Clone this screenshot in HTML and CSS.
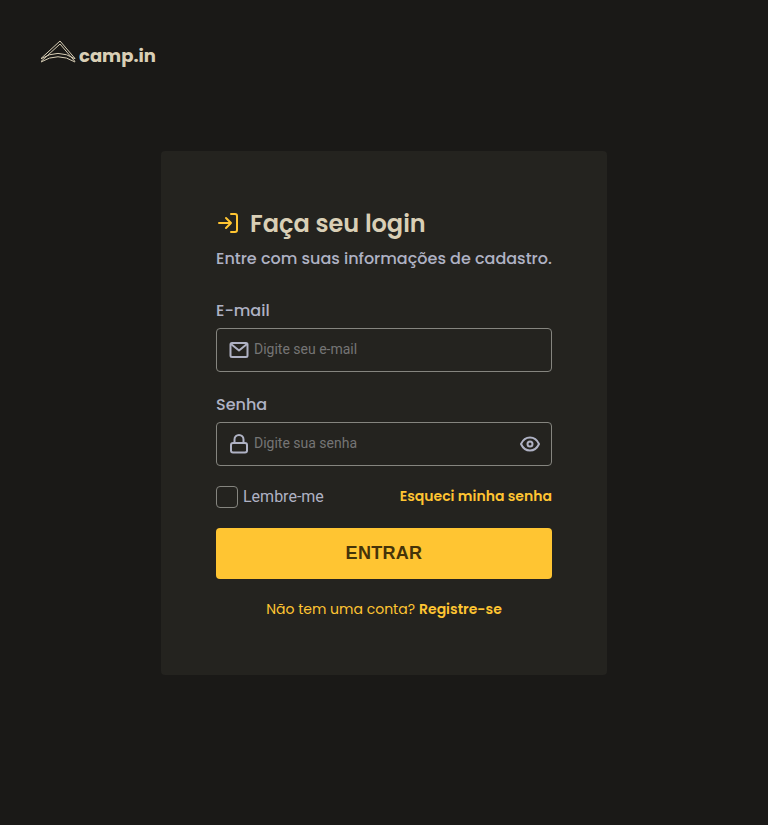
FILE: index.html
```html
<!DOCTYPE html>
<html lang="pt-BR">
<head>
<meta charset="utf-8">
<title>camp.in</title>
<link rel="stylesheet" href="styles.css">
</head>
<body>
<header class="header">
  <svg class="logo" width="36" height="24" viewBox="0 0 36 24" fill="none" stroke="currentColor" stroke-width="1"><path d="M1 18.500 20 1l15 17.500M1 21.500 20 4l15 17.500M1 18.800Q18 8 35 18.800M1 22Q18 11.500 35 22"/></svg>
  <span class="brand">camp.in</span>
</header>
<main class="card">
  <h1 class="title">
    <svg width="24" height="24" viewBox="0 0 24 24" fill="none" stroke="currentColor" stroke-width="2" stroke-linecap="round" stroke-linejoin="round"><path d="M15 3h4a2 2 0 0 1 2 2v14a2 2 0 0 1-2 2h-4M10 7l5 5-5 5M15 12H3"/></svg>
    <span>Faça seu login</span>
  </h1>
  <p class="subtitle">Entre com suas informações de cadastro.</p>
  <form class="form">
    <label class="label email-label" for="email">E-mail</label>
    <div class="field">
      <svg width="20" height="20" viewBox="0 0 20 20" fill="none" stroke="currentColor" stroke-width="2" stroke-linejoin="round"><rect x="1.5" y="3" width="17" height="14" rx="1.5"/><path d="m2 4 8 6.5L18 4"/></svg>
      <input id="email" type="text" placeholder="Digite seu e-mail">
    </div>
    <label class="label password-label" for="password">Senha</label>
    <div class="field">
      <svg width="20" height="20" viewBox="0 0 20 20" fill="none" stroke="currentColor" stroke-width="2" stroke-linejoin="round"><rect x="2" y="9" width="16" height="9.5" rx="2"/><path d="M5.5 9V5.5a4.5 4.5 0 0 1 9 0V9"/></svg>
      <input id="password" type="password" placeholder="Digite sua senha">
      <svg width="20" height="20" viewBox="0 0 20 20" fill="none" stroke="currentColor" stroke-width="2" stroke-linejoin="round"><path d="M1 10c2-4.300 5.200-6.500 9-6.500s7 2.200 9 6.500c-2 4.300-5.200 6.500-9 6.500S3 14.300 1 10z"/><circle cx="10" cy="10" r="2.500"/></svg>
    </div>
    <div class="options">
      <label class="remember"><input class="check" type="checkbox"><span>Lembre-me</span></label>
      <a class="forgot">Esqueci minha senha</a>
    </div>
    <button class="submit" type="button">ENTRAR</button>
  </form>
  <p class="register"><span class="question">Não tem uma conta?</span><a class="signup">Registre-se</a></p>
</main>
</body>
</html>
```
FILE: styles.css
```css
* { box-sizing: border-box; margin: 0; }
body {
  height: 825px;
  overflow: hidden;
  background: #1a1917;
  color: #afb2c4;
  font-family: Poppins, Inter, sans-serif;
}
svg { display: block; flex: none; }
.header { display: flex; height: 151px; padding: 40px 0 0 40px; color: #d9cfb6; }
.brand { margin-left: 3px; font-size: 18px; font-weight: 700; line-height: 32px; white-space: nowrap; }
.card {
  width: 446px;
  height: 524px;
  margin: 0 auto;
  padding: 53px 55px 0;
  border-radius: 4px;
  background: #24231f;
}
.title {
  display: flex;
  align-items: center;
  gap: 10px;
  height: 38px;
  color: #d9cfb6;
  font-size: 24px;
  font-weight: 600;
  white-space: nowrap;
}
.title svg { color: #ffc532; }
.subtitle { margin-top: 5px; font-size: 16px; font-weight: 500; line-height: 24px; white-space: nowrap; }
.label { display: block; font-size: 16px; font-weight: 500; line-height: 24px; }
.email-label { margin-top: 28px; }
.password-label { margin-top: 21px; }
.field {
  display: flex;
  align-items: center;
  gap: 5px;
  height: 44px;
  margin-top: 5px;
  padding: 0 11px 0 12px;
  border: 1px solid #85857f;
  border-radius: 4px;
}
.field input {
  flex: 1;
  min-width: 0;
  height: 30px;
  padding: 0 0 2px;
  border: 0;
  outline: 0;
  background: transparent;
  font: 14px Roboto, sans-serif;
}
.field input::placeholder { color: #757575; opacity: 1; }
.options { display: flex; justify-content: space-between; align-items: center; height: 22px; margin-top: 20px; }
.remember { display: flex; align-items: center; gap: 5px; font: 16px/22px Roboto, sans-serif; }
.check { appearance: none; width: 22px; height: 22px; border: 1px solid #85857f; border-radius: 4px; }
.forgot { padding-bottom: 2px; color: #ffc532; font-size: 14px; font-weight: 600; line-height: 20px; white-space: nowrap; }
.submit {
  display: block;
  width: 100%;
  height: 51px;
  margin-top: 20px;
  padding: 0;
  border: 0;
  border-radius: 4px;
  background: #ffc532;
  color: #453409;
  font: bold 18px "Liberation Sans", sans-serif;
  letter-spacing: .3px;
}
.register { display: flex; justify-content: center; gap: 4px; margin-top: 20px; color: #ffc532; font-size: 14px; line-height: 21px; white-space: nowrap; }
.signup { font-weight: 600; }
```
